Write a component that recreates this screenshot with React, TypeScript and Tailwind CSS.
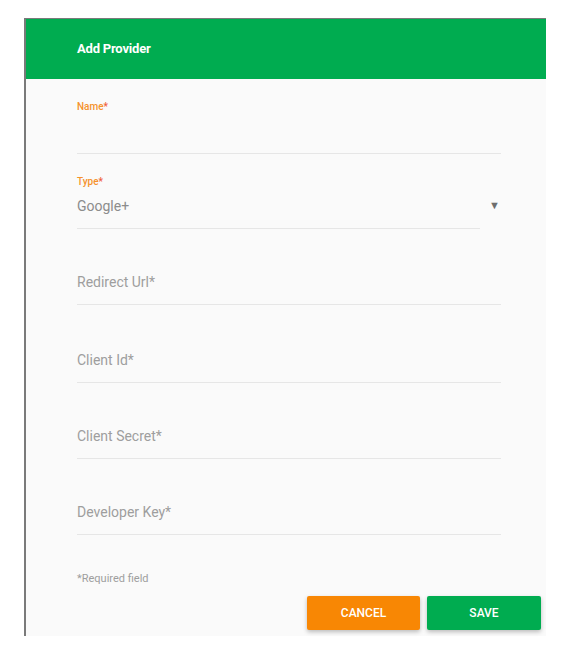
import React from 'react';

const fields = ['Redirect Url', 'Client Id', 'Client Secret', 'Developer Key'];

export default function App() {
  return (
    <div
      className="w-[579px] h-[654px] bg-white pt-[18px] pl-[24px]"
      style={{ fontFamily: 'Roboto, "Liberation Sans", sans-serif' }}
    >
      <div className="w-[522px] h-[618px] bg-[#fafafa] border-l-2 border-t border-[#7a7a7a] flex flex-col">
        {/* Header */}
        <div className="h-[60px] bg-[#00ac50] pl-[51px] flex items-center">
          <span className="text-white font-bold text-[13px] tracking-[-0.2px]">Add Provider</span>
        </div>

        <div className="pl-[51px] pr-[45px] flex flex-col">
          {/* Name */}
          <div className="pt-[22px] h-[75px] border-b border-[#e6e6e6]">
            <div className="text-[10px] leading-[12px] font-medium text-[#f5922c]">
              Name<span className="text-[#f0603a]">*</span>
            </div>
          </div>

          {/* Type */}
          <div className="pt-[22px] flex items-end">
            <div className="flex-1 flex flex-col">
              <div className="text-[10px] leading-[12px] font-medium text-[#f5922c]">
                Type<span className="text-[#f0603a]">*</span>
              </div>
              <div className="mt-[8px] text-[14px] leading-[20px] text-[#8c8c8c]">Google+</div>
              <div className="mt-[12px] w-[403px] border-b border-[#e6e6e6]" />
            </div>
          </div>
          <div className="relative">
            <span className="absolute right-[1px] top-[-31px] text-[11px] text-[#6e6e6e]">▼</span>
          </div>

          {fields.map((f, i) => (
            <div
              key={f}
              className={`${i === 1 ? 'h-[78px]' : 'h-[76px]'} flex flex-col justify-end pb-[12px] border-b border-[#e6e6e6]`}
            >
              <span className="text-[14px] leading-[20px] text-[#9e9e9e]">{f}*</span>
            </div>
          ))}

          <div className="mt-[37px] text-[11px] leading-[14px] text-[#9e9e9e]">*Required field</div>
        </div>

        <div className="mt-[10px] flex justify-end gap-[7px] pr-[5px]">
          <button className="w-[113px] h-[34px] bg-[#f88704] text-white text-[12px] font-medium rounded-[2px] shadow-[0_2px_4px_rgba(0,0,0,0.25)]">
            CANCEL
          </button>
          <button className="w-[114px] h-[34px] bg-[#00ac50] text-white text-[12px] font-medium rounded-[2px] shadow-[0_2px_4px_rgba(0,0,0,0.25)]">
            SAVE
          </button>
        </div>
      </div>
    </div>
  );
}
